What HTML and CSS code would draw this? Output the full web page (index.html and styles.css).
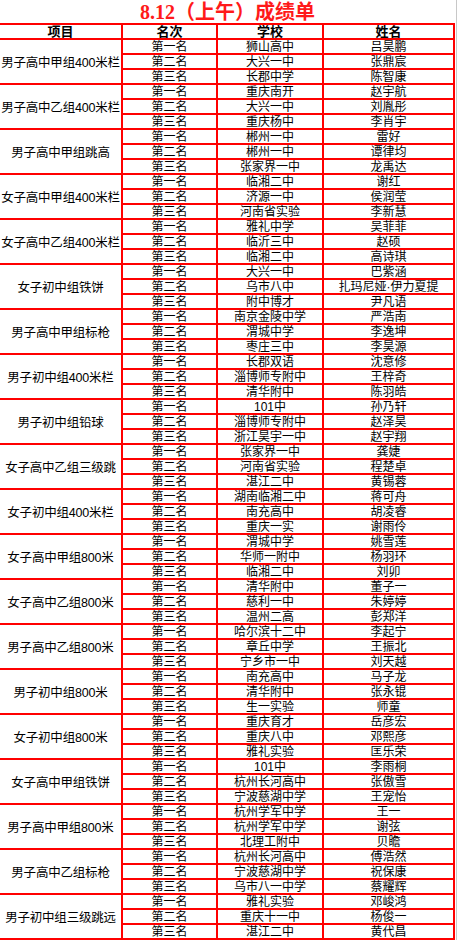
FILE: index.html
```html
<!DOCTYPE html>
<html lang="zh-CN">
<head>
<meta charset="utf-8">
<title>8.12（上午）成绩单</title>
<link rel="stylesheet" href="styles.css">
</head>
<body>
<div class="sheet">
  <h1 class="title">8.12（上午）成绩单</h1>
  <div class="grid">
    <div class="cell head">项目</div><div class="cell head">名次</div><div class="cell head">学校</div><div class="cell head">姓名</div>

    <div class="cell event">男子高中甲组400米栏</div>
    <div class="cell">第一名</div><div class="cell">狮山高中</div><div class="cell">吕昊鹏</div>
    <div class="cell">第二名</div><div class="cell">大兴一中</div><div class="cell">张鼎宸</div>
    <div class="cell">第三名</div><div class="cell">长郡中学</div><div class="cell">陈智康</div>

    <div class="cell event">男子高中乙组400米栏</div>
    <div class="cell">第一名</div><div class="cell">重庆南开</div><div class="cell">赵宇航</div>
    <div class="cell">第二名</div><div class="cell">大兴一中</div><div class="cell">刘胤彤</div>
    <div class="cell">第三名</div><div class="cell">重庆杨中</div><div class="cell">李肖宇</div>

    <div class="cell event">男子高中甲组跳高</div>
    <div class="cell">第一名</div><div class="cell">郴州一中</div><div class="cell">雷好</div>
    <div class="cell">第二名</div><div class="cell">郴州一中</div><div class="cell">谭律均</div>
    <div class="cell">第三名</div><div class="cell">张家界一中</div><div class="cell">龙禹达</div>

    <div class="cell event">女子高中甲组400米栏</div>
    <div class="cell">第一名</div><div class="cell">临湘二中</div><div class="cell">谢红</div>
    <div class="cell">第二名</div><div class="cell">济源一中</div><div class="cell">侯润莹</div>
    <div class="cell">第三名</div><div class="cell">河南省实验</div><div class="cell">李新慧</div>

    <div class="cell event">女子高中乙组400米栏</div>
    <div class="cell">第一名</div><div class="cell">雅礼中学</div><div class="cell">吴菲菲</div>
    <div class="cell">第二名</div><div class="cell">临沂三中</div><div class="cell">赵硕</div>
    <div class="cell">第三名</div><div class="cell">临湘二中</div><div class="cell">高诗琪</div>

    <div class="cell event">女子初中组铁饼</div>
    <div class="cell">第一名</div><div class="cell">大兴一中</div><div class="cell">巴紫涵</div>
    <div class="cell">第二名</div><div class="cell">乌市八中</div><div class="cell">扎玛尼娅·伊力夏提</div>
    <div class="cell">第三名</div><div class="cell">附中博才</div><div class="cell">尹凡语</div>

    <div class="cell event">男子高中甲组标枪</div>
    <div class="cell">第一名</div><div class="cell">南京金陵中学</div><div class="cell">严浩南</div>
    <div class="cell">第二名</div><div class="cell">渭城中学</div><div class="cell">李逸坤</div>
    <div class="cell">第三名</div><div class="cell">枣庄三中</div><div class="cell">李昊源</div>

    <div class="cell event">男子初中组400米栏</div>
    <div class="cell">第一名</div><div class="cell">长郡双语</div><div class="cell">沈意修</div>
    <div class="cell">第二名</div><div class="cell">淄博师专附中</div><div class="cell">王梓奇</div>
    <div class="cell">第三名</div><div class="cell">清华附中</div><div class="cell">陈羽皓</div>

    <div class="cell event">男子初中组铅球</div>
    <div class="cell">第一名</div><div class="cell">101中</div><div class="cell">孙乃轩</div>
    <div class="cell">第二名</div><div class="cell">淄博师专附中</div><div class="cell">赵泽昊</div>
    <div class="cell">第三名</div><div class="cell">浙江昊宇一中</div><div class="cell">赵宇翔</div>

    <div class="cell event">女子高中乙组三级跳</div>
    <div class="cell">第一名</div><div class="cell">张家界一中</div><div class="cell">龚婕</div>
    <div class="cell">第二名</div><div class="cell">河南省实验</div><div class="cell">程楚卓</div>
    <div class="cell">第三名</div><div class="cell">湛江二中</div><div class="cell">黄锡蓉</div>

    <div class="cell event">女子初中组400米栏</div>
    <div class="cell">第一名</div><div class="cell">湖南临湘二中</div><div class="cell">蒋可舟</div>
    <div class="cell">第二名</div><div class="cell">南充高中</div><div class="cell">胡凌睿</div>
    <div class="cell">第三名</div><div class="cell">重庆一实</div><div class="cell">谢雨伶</div>

    <div class="cell event">女子高中甲组800米</div>
    <div class="cell">第一名</div><div class="cell">渭城中学</div><div class="cell">姚雪莲</div>
    <div class="cell">第二名</div><div class="cell">华师一附中</div><div class="cell">杨羽环</div>
    <div class="cell">第三名</div><div class="cell">临湘二中</div><div class="cell">刘卯</div>

    <div class="cell event">女子高中乙组800米</div>
    <div class="cell">第一名</div><div class="cell">清华附中</div><div class="cell">董子一</div>
    <div class="cell">第二名</div><div class="cell">慈利一中</div><div class="cell">朱婷婷</div>
    <div class="cell">第三名</div><div class="cell">温州二高</div><div class="cell">彭郑洋</div>

    <div class="cell event">男子高中乙组800米</div>
    <div class="cell">第一名</div><div class="cell">哈尔滨十二中</div><div class="cell">李起宁</div>
    <div class="cell">第二名</div><div class="cell">章丘中学</div><div class="cell">王振北</div>
    <div class="cell">第三名</div><div class="cell">宁乡市一中</div><div class="cell">刘天越</div>

    <div class="cell event">男子初中组800米</div>
    <div class="cell">第一名</div><div class="cell">南充高中</div><div class="cell">马子龙</div>
    <div class="cell">第二名</div><div class="cell">清华附中</div><div class="cell">张永锟</div>
    <div class="cell">第三名</div><div class="cell">生一实验</div><div class="cell">师童</div>

    <div class="cell event">女子初中组800米</div>
    <div class="cell">第一名</div><div class="cell">重庆育才</div><div class="cell">岳彦宏</div>
    <div class="cell">第二名</div><div class="cell">重庆八中</div><div class="cell">邓熙彦</div>
    <div class="cell">第三名</div><div class="cell">雅礼实验</div><div class="cell">匡乐荣</div>

    <div class="cell event">女子高中甲组铁饼</div>
    <div class="cell">第一名</div><div class="cell">101中</div><div class="cell">李雨桐</div>
    <div class="cell">第二名</div><div class="cell">杭州长河高中</div><div class="cell">张傲雪</div>
    <div class="cell">第三名</div><div class="cell">宁波慈湖中学</div><div class="cell">王宠怡</div>

    <div class="cell event">男子高中甲组800米</div>
    <div class="cell">第一名</div><div class="cell">杭州学军中学</div><div class="cell">王一</div>
    <div class="cell">第二名</div><div class="cell">杭州学军中学</div><div class="cell">谢弦</div>
    <div class="cell">第三名</div><div class="cell">北理工附中</div><div class="cell">贝瞻</div>

    <div class="cell event">男子高中乙组标枪</div>
    <div class="cell">第一名</div><div class="cell">杭州长河高中</div><div class="cell">傅浩然</div>
    <div class="cell">第二名</div><div class="cell">宁波慈湖中学</div><div class="cell">祝保康</div>
    <div class="cell">第三名</div><div class="cell">乌市八一中学</div><div class="cell">蔡耀辉</div>

    <div class="cell event">男子初中组三级跳远</div>
    <div class="cell">第一名</div><div class="cell">雅礼实验</div><div class="cell">邓峻鸿</div>
    <div class="cell">第二名</div><div class="cell">重庆十一中</div><div class="cell">杨俊一</div>
    <div class="cell">第三名</div><div class="cell">湛江二中</div><div class="cell">黄代昌</div>
  </div>
</div>
</body>
</html>
```

FILE: styles.css
```css
html, body {
  margin: 0;
  padding: 0;
  background: #ffffff;
}

body {
  font-family: "Liberation Sans", "Noto Sans CJK SC", sans-serif;
  color: #000000;
}

.sheet {
  width: 456px;
  height: 940px;
  border-right: 1px solid #c8c8c8;
  overflow: hidden;
}

.title {
  margin: 0;
  height: 23px;
  width: 455px;
  text-align: center;
  font-family: "Liberation Serif", "Noto Sans CJK SC", serif;
  font-size: 20px;
  font-weight: bold;
  line-height: 25px;
  color: #ff1a1a;
}

.grid {
  width: 455px;
  display: grid;
  grid-template-columns: 123px 95px 106px 131px;
  grid-auto-rows: 15px;
  border-top: 2px solid #ff0000;
}

.cell {
  box-sizing: border-box;
  border-right: 2px solid #ff0000;
  border-bottom: 2px solid #ff0000;
  font-size: 12px;
  line-height: 14px;
  text-align: center;
  white-space: nowrap;
  overflow: hidden;
}

.head {
  font-size: 13px;
  font-weight: bold;
  line-height: 14px;
}

.event {
  grid-row: span 3;
  display: flex;
  align-items: center;
  justify-content: center;
  padding-top: 3px;
  font-size: 12.5px;
  letter-spacing: -0.2px;
}
```
